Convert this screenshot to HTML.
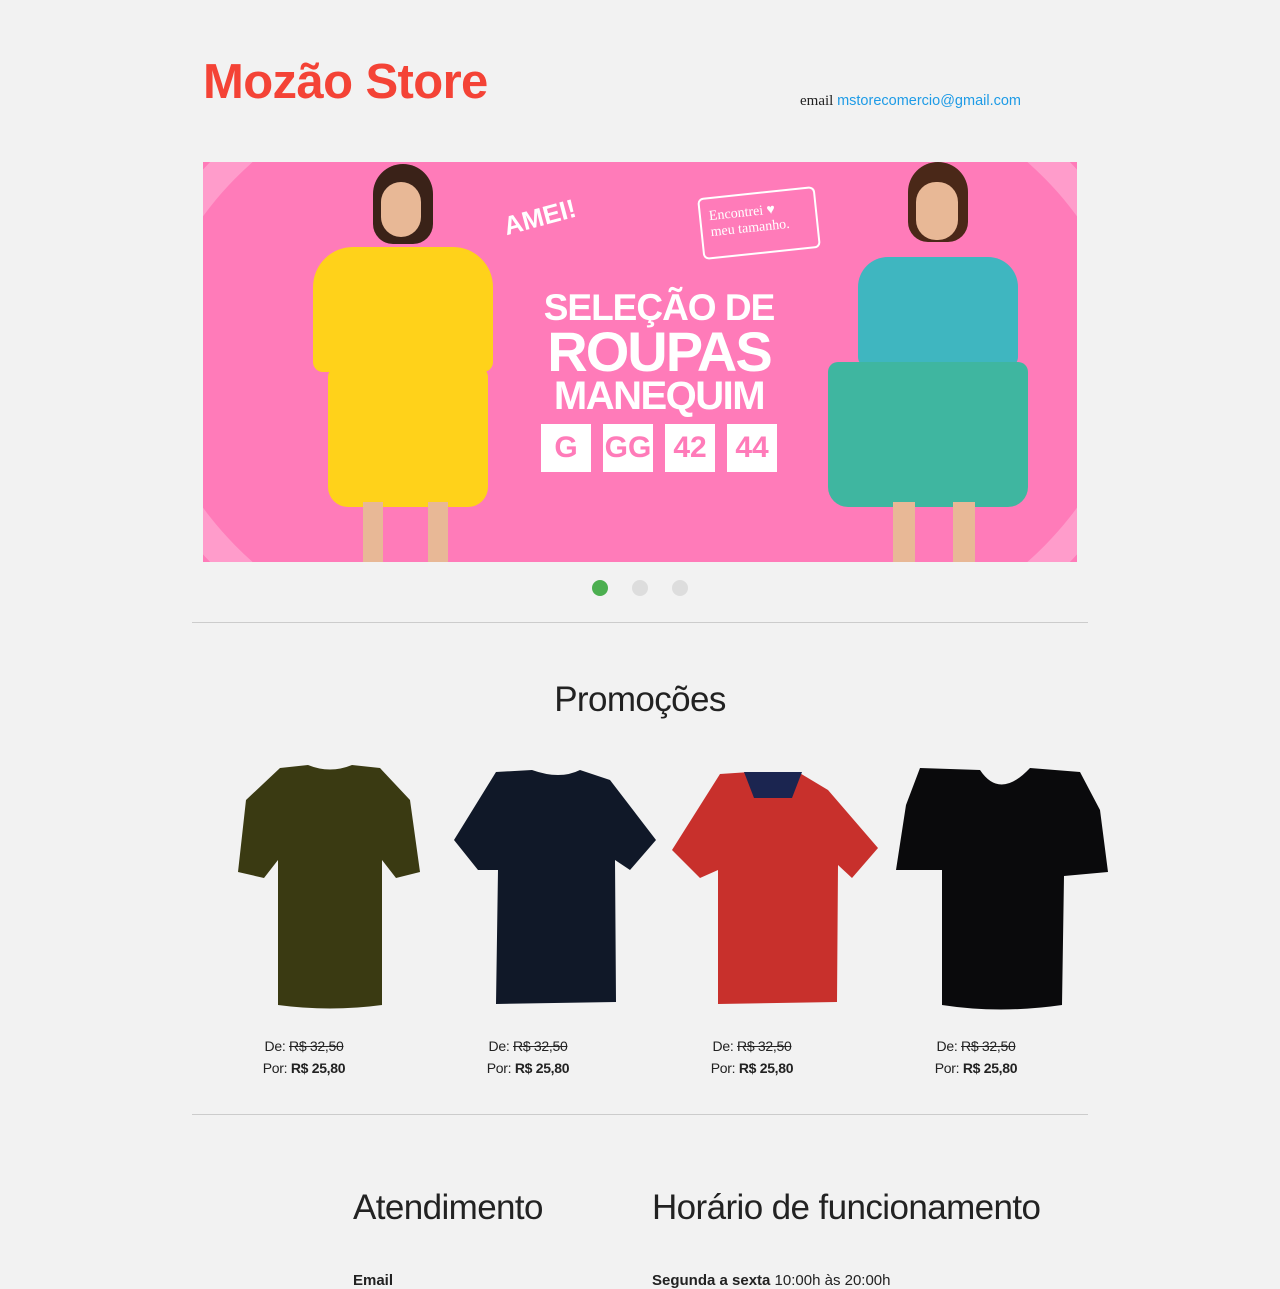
<!DOCTYPE html>
<html><head><meta charset="utf-8"><style>
*{margin:0;padding:0;box-sizing:border-box}
body{width:1280px;height:1280px;overflow:hidden;background:#f2f2f2;font-family:"Liberation Sans",sans-serif;color:#222;position:relative}
.abs{position:absolute}
h1{position:absolute;left:203px;top:54px;font-size:49px;font-weight:bold;color:#f44336;letter-spacing:-0.6px}
.email{left:800px;top:93px;font-size:15px;font-family:"Liberation Serif",serif}
.email span{font-family:"Liberation Sans",sans-serif;color:#1e9be6;font-size:14.5px}
.banner{left:203px;top:162px;width:874px;height:400px;background:#ff7bb9;overflow:hidden}
.dot{top:580px;width:16px;height:16px;border-radius:50%;background:#ddd}
.hr{left:192px;width:896px;height:1px;background:#ccc}
.price{width:200px;text-align:center;font-size:14px;line-height:22px;letter-spacing:-0.3px}
h2{position:absolute;font-weight:normal;font-size:35px;letter-spacing:-0.6px;white-space:nowrap}
.btxt{color:#fff;font-weight:bold;text-align:center;position:absolute;white-space:nowrap}
.sz{flex:1;background:#fff;color:#ff7bb9;font-weight:bold;font-size:30px;text-align:center;line-height:48px}
</style></head><body>
<h1>Mozão Store</h1>
<div class="abs email">email <span>mstorecomercio@gmail.com</span></div>
<div class="abs banner">
 <div class="abs" style="left:-80px;top:-160px;width:1034px;height:720px;border-radius:50%;border:30px solid #ff9ccb"></div>
 <!-- left woman -->
 <div class="abs" style="left:170px;top:2px;width:60px;height:80px;background:#3a2218;border-radius:30px 30px 20px 20px"></div>
 <div class="abs" style="left:178px;top:20px;width:40px;height:55px;background:#e8b896;border-radius:20px"></div>
 <div class="abs" style="left:110px;top:85px;width:180px;height:125px;background:#ffd21a;border-radius:40px 40px 10px 10px"></div>
 <div class="abs" style="left:125px;top:205px;width:160px;height:140px;background:#ffd21a;border-radius:10px 10px 20px 20px"></div>
 <div class="abs" style="left:160px;top:340px;width:20px;height:60px;background:#e8b896"></div>
 <div class="abs" style="left:225px;top:340px;width:20px;height:60px;background:#e8b896"></div>
 <!-- right woman -->
 <div class="abs" style="left:705px;top:0px;width:60px;height:80px;background:#4a2818;border-radius:30px 30px 20px 20px"></div>
 <div class="abs" style="left:713px;top:20px;width:42px;height:58px;background:#e8b896;border-radius:20px"></div>
 <div class="abs" style="left:655px;top:95px;width:160px;height:110px;background:#3fb6c0;border-radius:30px 30px 10px 10px"></div>
 <div class="abs" style="left:625px;top:200px;width:200px;height:145px;background:#3fb6a0;border-radius:10px 10px 20px 20px"></div>
 <div class="abs" style="left:690px;top:340px;width:22px;height:60px;background:#e8b896"></div>
 <div class="abs" style="left:750px;top:340px;width:22px;height:60px;background:#e8b896"></div>
 <div class="btxt" style="left:337px;top:126px;width:238px;font-size:37px;line-height:40px;letter-spacing:-1px">SELEÇÃO DE</div>
 <div class="btxt" style="left:337px;top:162px;width:238px;font-size:56px;line-height:56px;letter-spacing:-2px">ROUPAS</div>
 <div class="btxt" style="left:337px;top:212px;width:238px;font-size:40px;line-height:44px;letter-spacing:-1.5px">MANEQUIM</div>
 <div class="abs" style="left:338px;top:262px;width:236px;height:48px;display:flex;gap:12px">
  <div class="sz">G</div><div class="sz">GG</div><div class="sz">42</div><div class="sz">44</div>
 </div>
 <div class="btxt" style="left:300px;top:40px;font-size:26px;transform:rotate(-15deg)">AMEI!</div>
 <div class="abs" style="left:497px;top:30px;width:118px;height:62px;border:2px solid #fff;border-radius:6px;transform:rotate(-6deg);color:#fff;font-size:14px;padding:10px 8px;font-family:'Liberation Serif',serif">Encontrei ♥<br>meu tamanho.</div>
</div>
<div class="abs dot" style="left:592px;background:#4caf50"></div>
<div class="abs dot" style="left:632px"></div>
<div class="abs dot" style="left:672px"></div>
<div class="abs hr" style="top:622px"></div>
<h2 style="left:0;width:1280px;text-align:center;top:680px">Promoções</h2>
<svg class="abs" style="left:220px;top:760px" width="900" height="260">
 <path d="M60 8 L88 5 Q110 14 132 5 L160 8 L190 40 L200 112 L176 118 L162 100 L162 245 Q110 252 58 245 L58 100 L44 118 L18 112 L26 40 Z" fill="#3a3a12"/>
 <path d="M276 12 L312 10 Q340 20 360 10 L390 20 L436 80 L410 110 L395 100 L396 242 L276 244 L278 110 L258 110 L234 80 Z" fill="#101828"/>
 <path d="M500 14 L530 12 Q550 20 578 12 L608 30 L658 88 L632 118 L618 105 L617 242 L498 244 L498 110 L480 118 L452 90 Z" fill="#c8302c"/>
 <path d="M524 12 L582 12 L572 38 L534 38 Z" fill="#1b2550"/>
 <path d="M700 8 L760 10 Q780 40 810 8 L860 12 L880 50 L888 112 L844 116 L842 245 Q780 254 722 245 L722 110 L676 110 L686 45 Z" fill="#0a0a0c"/>
</svg>
<div class="abs price" style="left:204px;top:1035px">De: <s>R$ 32,50</s><br>Por: <b>R$ 25,80</b></div>
<div class="abs price" style="left:428px;top:1035px">De: <s>R$ 32,50</s><br>Por: <b>R$ 25,80</b></div>
<div class="abs price" style="left:652px;top:1035px">De: <s>R$ 32,50</s><br>Por: <b>R$ 25,80</b></div>
<div class="abs price" style="left:876px;top:1035px">De: <s>R$ 32,50</s><br>Por: <b>R$ 25,80</b></div>
<div class="abs hr" style="top:1114px"></div>
<h2 style="left:353px;top:1188px">Atendimento</h2>
<h2 style="left:652px;top:1188px">Horário de funcionamento</h2>
<div class="abs" style="left:353px;top:1272px;font-size:15px;font-weight:bold">Email</div>
<div class="abs" style="left:652px;top:1272px;font-size:15px"><b>Segunda a sexta</b> 10:00h às 20:00h</div>
</body></html>
